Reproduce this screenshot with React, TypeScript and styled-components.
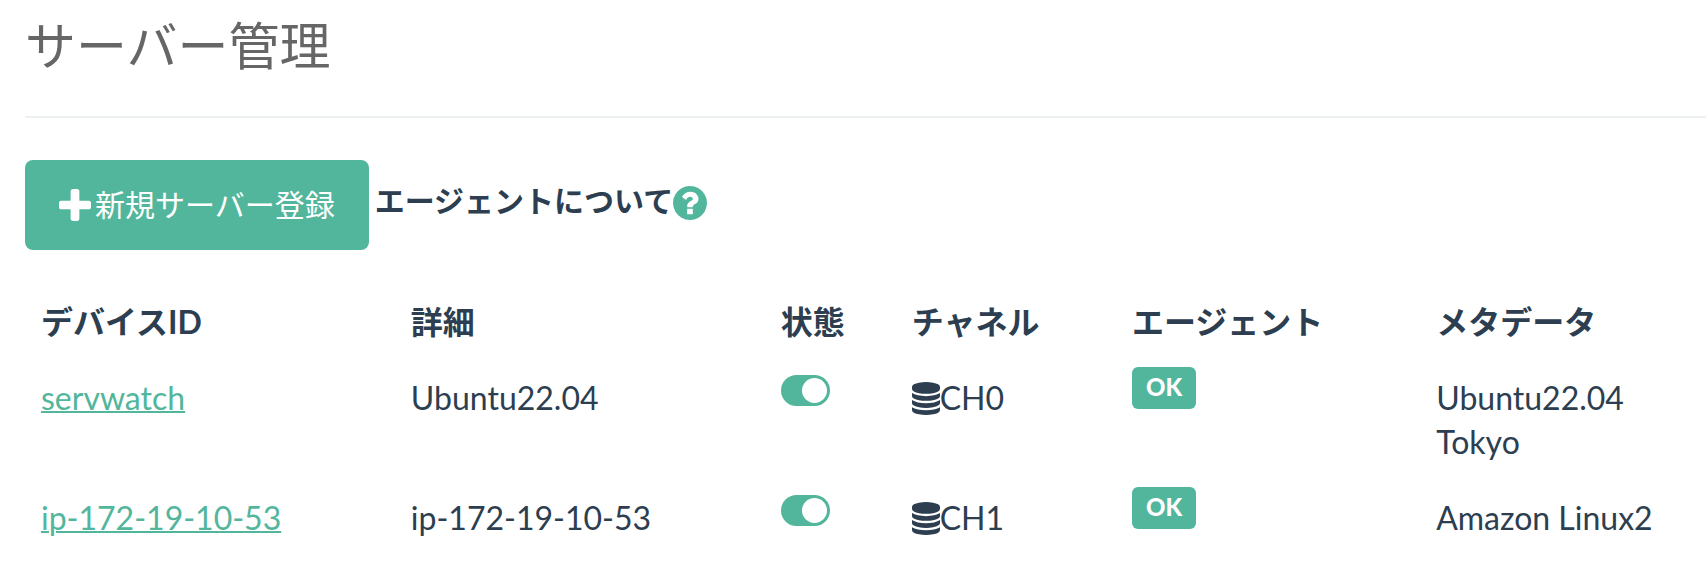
import React from "react";
import styled, { createGlobalStyle } from "styled-components";

const GREEN = "#52b69c";
const INK = "#2c3e50";

const GlobalStyle = createGlobalStyle`
  *, *::before, *::after { box-sizing: border-box; }
  body {
    margin: 0;
    background: #fff;
    color: ${INK};
    font-family: Lato, "Noto Sans CJK JP", sans-serif;
    font-size: 32px;
    line-height: 44px;
  }
`;

const Page = styled.main`
  padding: 16px 0 16px 25px;
`;

const Title = styled.h1`
  margin: 0;
  padding-bottom: 40px;
  border-bottom: 2px solid #ecf0f1;
  color: #666;
  font-size: 51px;
  font-weight: 400;
  line-height: 60px;
`;

const Toolbar = styled.div`
  display: flex;
  align-items: flex-start;
  gap: 6px;
  margin-top: 42px;
`;

const PrimaryButton = styled.button`
  display: flex;
  align-items: center;
  gap: 4px;
  height: 90px;
  padding: 0 34px;
  border: 0;
  border-radius: 8px;
  background: ${GREEN};
  color: #fff;
  font: inherit;
  font-size: 30px;
  cursor: pointer;
`;

const ButtonText = styled.span`
  padding-bottom: 2px;
`;

const Help = styled.div`
  display: flex;
  align-items: center;
  height: 86px;
  font-size: 30px;
  font-weight: 700;
`;

const HelpText = styled.span`
  padding-bottom: 6px;
`;

const HelpLink = styled.a`
  display: flex;
  color: ${GREEN};
`;

const Icon = styled.svg<{ $w: number; $h: number }>`
  flex: none;
  width: ${(p) => p.$w}px;
  height: ${(p) => p.$h}px;
  fill: currentColor;
`;

const Table = styled.table`
  width: 100%;
  margin-top: 34px;
  table-layout: fixed;
  border-collapse: collapse;
`;

const Col = styled.col<{ $width?: string }>`
  width: ${(p) => p.$width ?? "auto"};
`;

const HeadCell = styled.th`
  padding: 16px;
  text-align: left;
  white-space: nowrap;
`;

const Cell = styled.td<{ $top?: number }>`
  padding: ${(p) => p.$top ?? 16}px 16px 16px;
  vertical-align: top;
`;

const BodyRow = styled.tr`
  height: 120px;
`;

const DeviceLink = styled.a`
  color: ${GREEN};
  text-decoration: underline;
  text-decoration-thickness: 2px;
`;

const Switch = styled.input`
  display: block;
  appearance: none;
  width: 49px;
  height: 31px;
  margin: 0;
  padding: 3px;
  border-radius: 16px;
  background: #ccc;
  cursor: pointer;

  &::before {
    content: "";
    display: block;
    width: 25px;
    height: 25px;
    border-radius: 50%;
    background: #fff;
  }
  &:checked { background: ${GREEN}; }
  &:checked::before { margin-left: auto; }
`;

const Channel = styled.span`
  display: flex;
  align-items: center;
`;

const Badge = styled.span`
  display: block;
  width: max-content;
  padding: 5px 14px 7px;
  border-radius: 6px;
  background: ${GREEN};
  color: #fff;
  font-size: 24px;
  font-weight: 900;
  line-height: 30px;
`;

const MetaLine = styled.div`
  white-space: nowrap;
`;

const PlusIcon = () => (
  <Icon $w={32} $h={32} viewBox="0 -96 1408 1408" aria-hidden="true">
    <path d="M1408 512v192q0 40-28 68t-68 28h-416v416q0 40-28 68t-68 28h-192q-40 0-68-28t-28-68v-416h-416q-40 0-68-28t-28-68v-192q0-40 28-68t68-28h416v-416q0-40 28-68t68-28h192q40 0 68 28t28 68v416h416q40 0 68 28t28 68z" />
  </Icon>
);

const QuestionIcon = () => (
  <Icon $w={34} $h={34} viewBox="128 128 1536 1536" aria-hidden="true">
    <path d="M1024 1376v-192q0-14-9-23t-23-9h-192q-14 0-23 9t-9 23v192q0 14 9 23t23 9h192q14 0 23-9t9-23zm256-672q0-88-55.5-163t-138.500-116-170-41q-243 0-371 213-15 24 8 42l132 100q7 6 19 6 16 0 25-12 53-68 86-92 34-24 86-24 48 0 85.500 26t37.500 59q0 38-20 61t-68 45q-63 28-115.500 86.500t-52.500 125.500v36q0 14 9 23t23 9h192q14 0 23-9t9-23q0-19 21.500-49.500t54.500-49.500q32-18 49-28.500t46-35 44.500-48 28-60.500 12.500-81zm384 192q0 209-103 385.500t-279.500 279.500-385.500 103-385.500-103-279.500-279.500-103-385.500 103-385.500 279.500-279.500 385.500-103 385.500 103 279.500 279.500 103 385.500z" />
  </Icon>
);

const DatabaseIcon = () => (
  <Icon $w={28} $h={33} viewBox="0 0 1536 1792" preserveAspectRatio="none" aria-hidden="true">
    <path d="M768 768q237 0 443-43t325-127v170q0 69-103 128t-280 93.500-385 34.500-385-34.500-280-93.500-103-128v-170q119 84 325 127t443 43zm0 768q237 0 443-43t325-127v170q0 69-103 128t-280 93.500-385 34.500-385-34.500-280-93.500-103-128v-170q119 84 325 127t443 43zm0-384q237 0 443-43t325-127v170q0 69-103 128t-280 93.500-385 34.500-385-34.500-280-93.500-103-128v-170q119 84 325 127t443 43zm0-1152q208 0 385 34.500t280 93.500 103 128v128q0 69-103 128t-280 93.500-385 34.500-385-34.500-280-93.500-103-128v-128q0-69 103-128t280-93.500 385-34.500z" />
  </Icon>
);

const columns: { label: string; width?: string }[] = [
  { label: "デバイスID", width: "22%" },
  { label: "詳細", width: "22%" },
  { label: "状態", width: "7.8%" },
  { label: "チャネル", width: "13.1%" },
  { label: "エージェント", width: "18.1%" },
  { label: "メタデータ" },
];

const servers = [
  { id: "servwatch", detail: "Ubuntu22.04", channel: "CH0", agent: "OK", meta: ["Ubuntu22.04", "Tokyo"] },
  { id: "ip-172-19-10-53", detail: "ip-172-19-10-53", channel: "CH1", agent: "OK", meta: ["Amazon Linux2"] },
];

export default function App() {
  return (
    <>
      <GlobalStyle />
      <Page lang="ja">
        <Title>サーバー管理</Title>
        <Toolbar>
          <PrimaryButton type="button">
            <PlusIcon />
            <ButtonText>新規サーバー登録</ButtonText>
          </PrimaryButton>
          <Help>
            <HelpText id="agent-help">エージェントについて</HelpText>
            <HelpLink href="#agent" aria-labelledby="agent-help">
              <QuestionIcon />
            </HelpLink>
          </Help>
        </Toolbar>
        <Table>
          <colgroup>
            {columns.map((c) => (
              <Col key={c.label} $width={c.width} />
            ))}
          </colgroup>
          <thead>
            <tr>
              {columns.map((c) => (
                <HeadCell key={c.label} scope="col">{c.label}</HeadCell>
              ))}
            </tr>
          </thead>
          <tbody>
            {servers.map((s) => (
              <BodyRow key={s.id}>
                <Cell><DeviceLink id={`device-${s.id}`} href={`#${s.id}`}>{s.id}</DeviceLink></Cell>
                <Cell>{s.detail}</Cell>
                <Cell $top={15}>
                  <Switch type="checkbox" role="switch" defaultChecked aria-labelledby={`device-${s.id}`} />
                </Cell>
                <Cell>
                  <Channel><DatabaseIcon />{s.channel}</Channel>
                </Cell>
                <Cell $top={7}><Badge>{s.agent}</Badge></Cell>
                <Cell>
                  {s.meta.map((m) => (
                    <MetaLine key={m}>{m}</MetaLine>
                  ))}
                </Cell>
              </BodyRow>
            ))}
          </tbody>
        </Table>
      </Page>
    </>
  );
}
